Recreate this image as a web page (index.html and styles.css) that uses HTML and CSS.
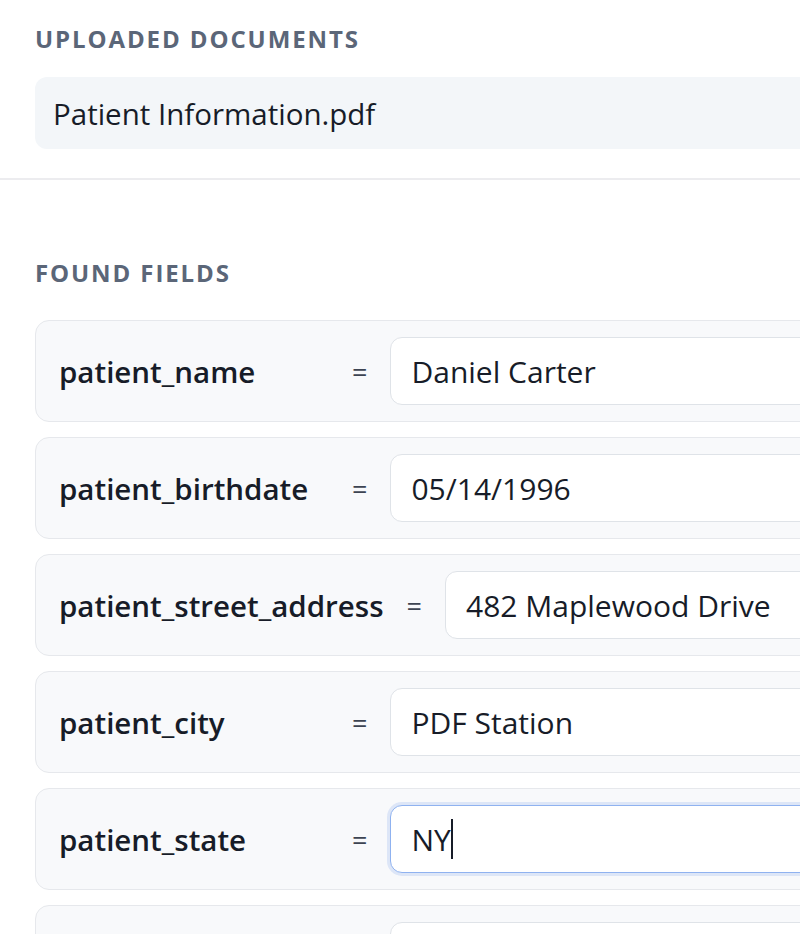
FILE: index.html
```html
<!DOCTYPE html>
<html lang="en">
<head>
<meta charset="utf-8">
<title>Documents</title>
<link rel="stylesheet" href="styles.css">
</head>
<body>
<div class="page">
  <section class="uploaded">
    <h2 class="section-title">Uploaded Documents</h2>
    <div class="doc">Patient Information.pdf</div>
  </section>
  <hr class="divider">
  <section class="found">
    <h2 class="section-title">Found Fields</h2>
    <div class="fields">
      <div class="field">
        <span class="field-name">patient_name</span>
        <span class="eq">=</span>
        <div class="value">Daniel Carter</div>
      </div>
      <div class="field">
        <span class="field-name">patient_birthdate</span>
        <span class="eq">=</span>
        <div class="value">05/14/1996</div>
      </div>
      <div class="field">
        <span class="field-name">patient_street_address</span>
        <span class="eq">=</span>
        <div class="value">482 Maplewood Drive</div>
      </div>
      <div class="field">
        <span class="field-name">patient_city</span>
        <span class="eq">=</span>
        <div class="value">PDF Station</div>
      </div>
      <div class="field">
        <span class="field-name">patient_state</span>
        <span class="eq">=</span>
        <div class="value focused">NY<span class="caret"></span></div>
      </div>
      <div class="field">
        <span class="field-name"></span>
        <span class="eq"></span>
        <div class="value"></div>
      </div>
    </div>
  </section>
</div>
</body>
</html>
```

FILE: styles.css
```css
* { box-sizing: border-box; }
html, body { margin: 0; padding: 0; background: #ffffff; }
body {
  font-family: "Open Sans", "Noto Sans", sans-serif;
  color: #171c28;
  overflow: hidden;
  height: 934px;
}
.page { width: 800px; }
.section-title {
  margin: 0;
  font-size: 24px;
  line-height: 32px;
  font-weight: 700;
  letter-spacing: 1.9px;
  text-transform: uppercase;
  color: #5b6678;
}
.uploaded { padding: 23px 0 29px 35px; }
.doc {
  margin-top: 22px;
  height: 72px;
  width: 800px;
  background: #f3f6f9;
  border-radius: 12px;
  padding: 0 18px;
  display: flex;
  align-items: center;
  font-size: 29.5px;
  color: #171c28;
}
.divider {
  margin: 0;
  border: 0;
  border-top: 2px solid #ececef;
}
.found { padding: 77px 0 0 35px; }
.found .section-title { margin-bottom: 31px; }
.fields { display: flex; flex-direction: column; gap: 15px; }
.field {
  width: 800px;
  display: flex;
  align-items: center;
  gap: 23px;
  padding: 16px 0 16px 23px;
  background: #f8f9fb;
  border: 1px solid #e6e8ec;
  border-radius: 14px;
}
.field-name {
  min-width: 270px;
  font-size: 29.5px;
  font-weight: 600;
  color: #171c28;
}
.eq { min-width: 15px; font-size: 27px; color: #3d4452; }
.value {
  flex: 1;
  height: 68px;
  background: #ffffff;
  border: 1px solid #dfe3e8;
  border-radius: 12px;
  padding: 0 20px;
  display: flex;
  align-items: center;
  font-size: 30px;
  color: #171c28;
}
.value.focused {
  border-color: #8fb2f0;
  box-shadow: 0 0 0 3px rgba(99, 145, 235, 0.18);
}
.caret {
  display: inline-block;
  width: 2px;
  height: 40px;
  background: #171c28;
}
```
